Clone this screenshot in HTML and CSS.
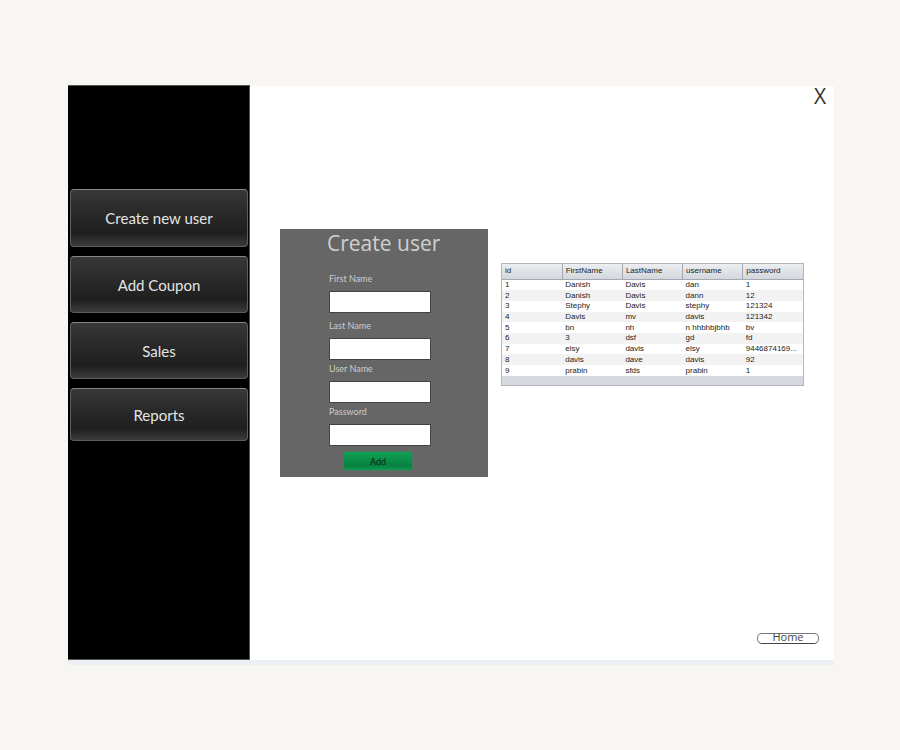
FILE: index.html
```html
<!DOCTYPE html>
<html lang="en">
<head>
<meta charset="utf-8">
<title>Create user</title>
<link rel="stylesheet" href="styles.css">
</head>
<body>
<div class="window">
  <nav class="sidebar">
    <button class="nav-button nav-button-tall" type="button">Create new user</button>
    <button class="nav-button" type="button">Add Coupon</button>
    <button class="nav-button" type="button">Sales</button>
    <button class="nav-button nav-button-short" type="button">Reports</button>
  </nav>
  <main class="main">
    <header class="topbar"><button class="close" type="button">X</button></header>
    <div class="content">
      <form class="panel">
        <h1 class="title">Create user</h1>
        <div class="field field-spaced">
          <label for="first">First Name</label>
          <input id="first" type="text">
        </div>
        <div class="field field-spaced">
          <label for="last">Last Name</label>
          <input id="last" type="text">
        </div>
        <div class="field">
          <label for="user">User Name</label>
          <input id="user" type="text">
        </div>
        <div class="field">
          <label for="pass">Password</label>
          <input id="pass" type="password">
        </div>
        <button class="add" type="button">Add</button>
      </form>
      <div class="users">
        <table>
          <thead>
            <tr><th>id</th><th>FirstName</th><th>LastName</th><th>username</th><th>password</th></tr>
          </thead>
          <tbody>
            <tr><td>1</td><td>Danish</td><td>Davis</td><td>dan</td><td>1</td></tr>
            <tr><td>2</td><td>Danish</td><td>Davis</td><td>dann</td><td>12</td></tr>
            <tr><td>3</td><td>Stephy</td><td>Davis</td><td>stephy</td><td>121324</td></tr>
            <tr><td>4</td><td>Davis</td><td>mv</td><td>davis</td><td>121342</td></tr>
            <tr><td>5</td><td>bn</td><td>nh</td><td>n hhbhbjbhb</td><td>bv</td></tr>
            <tr><td>6</td><td>3</td><td>dsf</td><td>gd</td><td>fd</td></tr>
            <tr><td>7</td><td>elsy</td><td>davis</td><td>elsy</td><td>9446874169...</td></tr>
            <tr><td>8</td><td>davis</td><td>dave</td><td>davis</td><td>92</td></tr>
            <tr><td>9</td><td>prabin</td><td>sfds</td><td>prabin</td><td>1</td></tr>
          </tbody>
        </table>
      </div>
    </div>
    <footer class="bottombar"><button class="home" type="button">Home</button></footer>
  </main>
</div>
</body>
</html>
```
FILE: styles.css
```css
* {
  box-sizing: border-box;
}

body {
  margin: 0;
  padding: 85px 66px 85px 68px;
  background: #f7f6f2;
  font-family: "Open Sans", "Noto Sans", sans-serif;
}

button {
  padding: 0;
  font-family: inherit;
}

.window {
  display: flex;
  min-height: calc(100vh - 170px);
  border-bottom: 5px solid #eceff3;
  background: #fff;
}

.sidebar {
  display: flex;
  flex: 0 0 182px;
  flex-direction: column;
  gap: 9px;
  padding: 103px 1px 0 2px;
  border: 1px solid #555;
  border-left: 0;
  background: #000;
}

.nav-button {
  height: 57px;
  border: 1px solid #5c5f60;
  border-top-color: #858989;
  border-radius: 4px;
  background: linear-gradient(#383838, #2b2b2b 35%, #1f1f1f 78%, #3c3c3c);
  color: #e4e4e4;
  font-family: Lato, sans-serif;
  font-size: 15px;
}

.nav-button-tall {
  height: 58px;
}

.nav-button-short {
  height: 53px;
}

.main {
  display: flex;
  flex: 1;
  flex-direction: column;
  border-top: 1px solid #fbeff0;
  border-right: 1px solid #fbeff0;
}

.topbar {
  display: flex;
  justify-content: flex-end;
  height: 143px;
  padding-right: 7px;
}

.close {
  width: 14px;
  height: 20px;
  border: 0;
  background: none;
  color: #333;
  font-size: 21px;
  line-height: 20px;
}

.content {
  display: flex;
  align-items: flex-start;
  gap: 13px;
  padding: 0 30px;
}

.panel {
  display: flex;
  flex: 0 0 208px;
  flex-direction: column;
  align-items: flex-start;
  padding: 0 0 6px 49px;
  background: #666;
}

.title {
  margin: 0 -2px 8px;
  color: #d0d0d0;
  font-size: 21px;
  font-weight: 400;
  line-height: 29px;
}

.field {
  display: flex;
  flex-direction: column;
  gap: 6px;
  padding-top: 3px;
}

.field-spaced {
  padding-top: 7px;
}

.field label {
  color: #ccc;
  font-family: Lato, sans-serif;
  font-size: 9px;
  line-height: 12px;
}

.field input {
  width: 102px;
  height: 22px;
  border: 1px solid #444;
  background: #fff;
  font-size: 10px;
}

.add {
  width: 70px;
  height: 20px;
  margin: 5px 0 0 14px;
  border: 1px solid #4c7a60;
  border-radius: 3px;
  background: linear-gradient(#10a054, #0b8d48 50%, #08803f 75%, #109a50);
  color: #06200f;
  font-family: Lato, sans-serif;
  font-size: 9px;
}

.users {
  flex: 0 0 303px;
  margin-top: 34px;
  padding-bottom: 9px;
  border: 1px solid #b3b6bc;
  background: #d6d9df;
}

table {
  width: 100%;
  height: 112px;
  border-collapse: collapse;
  table-layout: fixed;
  color: #222;
  font-family: "Liberation Sans", Arial, sans-serif;
  font-size: 8px;
  line-height: 10px;
}

th,
td {
  padding: 0 0 0 3px;
  font-weight: 400;
  text-align: left;
  white-space: nowrap;
}

th {
  height: 15px;
  border-right: 1px solid #a4a8b0;
  border-bottom: 1px solid #a4a8b0;
  background: linear-gradient(#eceef1, #d3d6dc);
}

th:last-child {
  border-right: 0;
}

tbody tr {
  background: #fff;
}

tbody tr:nth-child(even) {
  background: #f2f2f2;
}

.bottombar {
  display: flex;
  justify-content: flex-end;
  margin-top: auto;
  padding: 0 15px 16px 0;
}

.home {
  width: 62px;
  height: 11px;
  padding-bottom: 4px;
  border: 1px solid #777;
  border-bottom-color: #444;
  border-radius: 5px;
  background: #fff;
  color: #444;
  font-size: 11px;
  line-height: 5px;
}
```
